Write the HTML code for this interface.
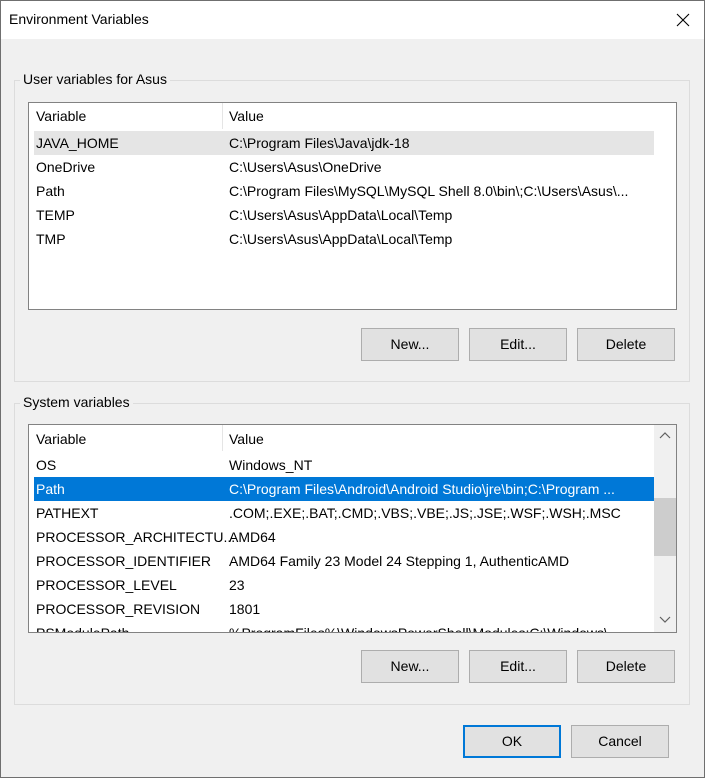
<!DOCTYPE html><html><head><style>
body{margin:0;width:706px;height:779px;background:#fff;font-family:"Liberation Sans",sans-serif;font-size:14px;color:#000;position:relative;overflow:hidden}
.a{position:absolute}
.win{left:0;top:0;width:703px;height:776px;border:1px solid #6f6f6f;background:#f0f0f0}
.title{left:1px;top:1px;width:703px;height:38px;background:#fff}
.grp{border:1px solid #dcdcdc}
.lbl{background:#f0f0f0;padding:0 3px}
.list{background:#fff;border:1px solid #828282}
.btn{background:#e1e1e1;border:1px solid #adadad;text-align:center;line-height:31px;box-sizing:border-box;width:98px;height:33px}
.row{height:24px;line-height:24px;white-space:nowrap}
.c1{position:absolute;left:7px}
.c2{position:absolute;left:200px}
</style></head><body>
<div class="a win"></div>
<div class="a title"></div>
<div class="a" style="left:9px;top:11px;font-size:14px">Environment Variables</div>
<svg class="a" style="left:676px;top:13px" width="14" height="14"><path d="M1 1L13 13M13 1L1 13" stroke="#000" stroke-width="1.1"/></svg>

<div class="a grp" style="left:14px;top:80px;width:674px;height:300px"></div>
<div class="a lbl" style="left:20px;top:71px">User variables for Asus</div>
<div class="a list" style="left:28px;top:102px;width:647px;height:206px">
 <div class="a" style="left:0;top:0;width:647px;height:26px;">
  <div class="c1" style="top:5px">Variable</div><div class="a" style="left:193px;top:0;width:1px;height:26px;background:#e5e5e5"></div><div class="c2" style="top:5px">Value</div></div>
 <div class="a" style="left:5px;top:28px;width:620px">
  <div class="row a" style="top:0;width:620px;background:#e5e5e5"><span class="c1" style="left:2px">JAVA_HOME</span><span class="c2" style="left:195px">C:\Program Files\Java\jdk-18</span></div>
  <div class="row a" style="top:24px"><span class="c1" style="left:2px">OneDrive</span><span class="c2" style="left:195px">C:\Users\Asus\OneDrive</span></div>
  <div class="row a" style="top:48px"><span class="c1" style="left:2px">Path</span><span class="c2" style="left:195px">C:\Program Files\MySQL\MySQL Shell 8.0\bin\;C:\Users\Asus\...</span></div>
  <div class="row a" style="top:72px"><span class="c1" style="left:2px">TEMP</span><span class="c2" style="left:195px">C:\Users\Asus\AppData\Local\Temp</span></div>
  <div class="row a" style="top:96px"><span class="c1" style="left:2px">TMP</span><span class="c2" style="left:195px">C:\Users\Asus\AppData\Local\Temp</span></div>
 </div>
</div>
<div class="a btn" style="left:361px;top:328px">New...</div>
<div class="a btn" style="left:469px;top:328px">Edit...</div>
<div class="a btn" style="left:577px;top:328px">Delete</div>

<div class="a grp" style="left:14px;top:403px;width:674px;height:300px"></div>
<div class="a lbl" style="left:20px;top:394px">System variables</div>
<div class="a list" style="left:28px;top:424px;width:647px;height:207px;overflow:hidden">
 <div class="a" style="left:0;top:0;width:625px;height:26px;">
  <div class="c1" style="top:6px">Variable</div><div class="a" style="left:193px;top:0;width:1px;height:26px;background:#e5e5e5"></div><div class="c2" style="top:6px">Value</div></div>
 <div class="a" style="left:5px;top:28px;width:620px">
  <div class="row a" style="top:0"><span class="c1" style="left:2px">OS</span><span class="c2" style="left:195px">Windows_NT</span></div>
  <div class="row a" style="top:24px;width:620px;background:#0078d7;color:#fff"><span class="c1" style="left:2px">Path</span><span class="c2" style="left:195px">C:\Program Files\Android\Android Studio\jre\bin;C:\Program ...</span></div>
  <div class="row a" style="top:48px"><span class="c1" style="left:2px">PATHEXT</span><span class="c2" style="left:195px">.COM;.EXE;.BAT;.CMD;.VBS;.VBE;.JS;.JSE;.WSF;.WSH;.MSC</span></div>
  <div class="row a" style="top:72px"><span class="c1" style="left:2px">PROCESSOR_ARCHITECTU...</span><span class="c2" style="left:195px">AMD64</span></div>
  <div class="row a" style="top:96px"><span class="c1" style="left:2px">PROCESSOR_IDENTIFIER</span><span class="c2" style="left:195px">AMD64 Family 23 Model 24 Stepping 1, AuthenticAMD</span></div>
  <div class="row a" style="top:120px"><span class="c1" style="left:2px">PROCESSOR_LEVEL</span><span class="c2" style="left:195px">23</span></div>
  <div class="row a" style="top:144px"><span class="c1" style="left:2px">PROCESSOR_REVISION</span><span class="c2" style="left:195px">1801</span></div>
  <div class="row a" style="top:168px"><span class="c1" style="left:2px">PSModulePath</span><span class="c2" style="left:195px">%ProgramFiles%\WindowsPowerShell\Modules;C:\Windows\...</span></div>
 </div>
 <div class="a" style="left:625px;top:0;width:22px;height:207px;background:#f0f0f0"></div>
 <div class="a" style="left:625px;top:73px;width:22px;height:58px;background:#cdcdcd"></div>
 <svg class="a" style="left:630px;top:7px" width="12" height="8"><path d="M1 6L6 1L11 6" stroke="#606060" fill="none" stroke-width="1.2"/></svg>
 <svg class="a" style="left:630px;top:191px" width="12" height="8"><path d="M1 1L6 6L11 1" stroke="#606060" fill="none" stroke-width="1.2"/></svg>
</div>
<div class="a btn" style="left:361px;top:650px">New...</div>
<div class="a btn" style="left:469px;top:650px">Edit...</div>
<div class="a btn" style="left:577px;top:650px">Delete</div>

<div class="a btn" style="left:463px;top:725px;border:2px solid #0078d7;line-height:29px">OK</div>
<div class="a btn" style="left:571px;top:725px">Cancel</div>
</body></html>
